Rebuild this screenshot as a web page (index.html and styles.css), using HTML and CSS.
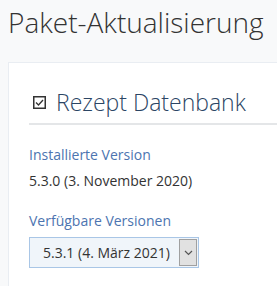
FILE: index.html
```html
<!DOCTYPE html>
<html lang="de">
<head>
<meta charset="utf-8">
<link rel="stylesheet" href="styles.css">
</head>
<body>
<h1 class="page-title">Paket-Aktualisierung</h1>
<div class="card">
  <h2 class="card-title">
    <svg class="check" width="13" height="13" viewBox="0 0 13 13"><rect x="0.75" y="0.75" width="11.5" height="11.5" fill="none" stroke="#333" stroke-width="1.5"/><path d="M3 6.5 L5.5 9 L10 4" fill="none" stroke="#333" stroke-width="1.3"/></svg>
    <span>Rezept Datenbank</span>
  </h2>
  <div class="field">
    <div class="label">Installierte Version</div>
    <div class="value">5.3.0 (3. November 2020)</div>
  </div>
  <div class="field field-select">
    <div class="label">Verfügbare Versionen</div>
    <div class="select">
      <span class="select-text">5.3.1 (4. März 2021)</span>
      <span class="select-btn"><svg width="9" height="6" viewBox="0 0 9 6"><path d="M1 1 L4.5 4.5 L8 1" fill="none" stroke="#555" stroke-width="1.2"/></svg></span>
    </div>
  </div>
</div>
</body>
</html>
```
FILE: styles.css
```css
html, body {
  margin: 0;
  padding: 0;
  background: #f8f9fa;
  font-family: "Open Sans", sans-serif;
  overflow: hidden;
}
body {
  padding: 0 0 0 8px;
}
.page-title {
  margin: 0;
  padding-top: 2px;
  font-size: 28px;
  font-weight: 300;
  color: #333;
  line-height: 40px;
}
.card {
  margin-top: 20px;
  background: #fff;
  border: 1px solid #e9edf2;
  border-right: none;
  padding: 0 0 30px 20px;
}
.card-title {
  margin: 0;
  padding-top: 18px;
  height: 42px;
  display: flex;
  align-items: center;
  gap: 10px;
  font-size: 23px;
  font-weight: 300;
  color: #2b4564;
  border-bottom: 2px solid #e4e6e8;
  padding-left: 4px;
}
.check { flex: none; }
.field { margin-top: 20px; }
.field-select { margin-top: 21px; }
.label {
  font-size: 14px;
  color: #4c74b0;
  line-height: 19px;
}
.value {
  font-size: 14px;
  color: #333;
  line-height: 19px;
  margin-top: 7px;
}
.select {
  margin-top: 7px;
  display: flex;
  width: 170px;
  height: 31px;
  box-sizing: border-box;
  border: 1px solid #a9c6e6;
  background: #f0f5fa;
}
.select-text {
  flex: 1;
  font-size: 14px;
  color: #333;
  line-height: 29px;
  padding-left: 13px;
}
.select-btn {
  width: 16px;
  background: #e1e1e1;
  border: 1px solid #a0a0a0;
  margin: 1px 1px 1px 0;
  display: flex;
  align-items: center;
  justify-content: center;
}
```
